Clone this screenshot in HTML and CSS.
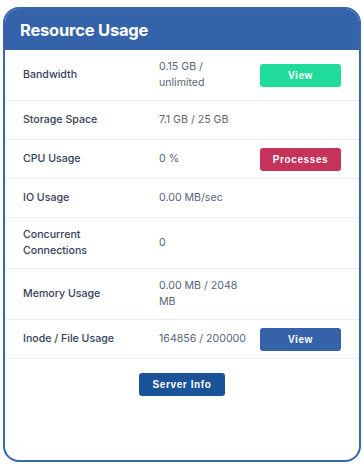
FILE: index.html
```html
<!DOCTYPE html>
<html lang="en">
<head>
    <meta charset="UTF-8">
    <meta name="viewport" content="width=device-width, initial-scale=1.0">
    <title>Resource Usage</title>
    <link rel="stylesheet" href="styles.css">
</head>
<body>
    <div class="card">
        <div class="card-header">
            <h2 class="card-title">Resource Usage</h2>
        </div>
        <div class="usage-list">
            <div class="usage-row double">
                <div class="usage-label">Bandwidth</div>
                <div class="usage-value">0.15 GB /<br>unlimited</div>
                <div class="usage-action"><button class="btn btn-green">View</button></div>
            </div>
            <div class="usage-row">
                <div class="usage-label">Storage Space</div>
                <div class="usage-value">7.1 GB / 25 GB</div>
                <div class="usage-action"></div>
            </div>
            <div class="usage-row">
                <div class="usage-label">CPU Usage</div>
                <div class="usage-value">0 %</div>
                <div class="usage-action"><button class="btn btn-red">Processes</button></div>
            </div>
            <div class="usage-row">
                <div class="usage-label">IO Usage</div>
                <div class="usage-value">0.00 MB/sec</div>
                <div class="usage-action"></div>
            </div>
            <div class="usage-row double">
                <div class="usage-label">Concurrent<br>Connections</div>
                <div class="usage-value">0</div>
                <div class="usage-action"></div>
            </div>
            <div class="usage-row double">
                <div class="usage-label">Memory Usage</div>
                <div class="usage-value">0.00 MB / 2048<br>MB</div>
                <div class="usage-action"></div>
            </div>
            <div class="usage-row">
                <div class="usage-label">Inode / File Usage</div>
                <div class="usage-value">164856 / 200000</div>
                <div class="usage-action"><button class="btn btn-blue">View</button></div>
            </div>
        </div>
        <div class="card-footer">
            <button class="btn btn-navy">Server Info</button>
        </div>
    </div>
</body>
</html>
```

FILE: styles.css
```css
body {
    margin: 0;
    font-family: Inter, "Noto Sans", sans-serif;
    background: #fff;
}
.card {
    box-sizing: border-box;
    width: 358px;
    height: 455px;
    margin: 7px 0 0 3px;
    border: 2px solid #3866ad;
    border-radius: 16px;
    overflow: hidden;
    background: #fff;
}
.card-header {
    height: 41px;
    background-color: #3563a9;
    display: flex;
    align-items: center;
    padding-left: 15px;
}
.card-title {
    margin: 0;
    color: #fff;
    font-size: 16.5px;
    font-weight: 700;
    letter-spacing: -0.2px;
}
.usage-row {
    display: grid;
    grid-template-columns: 136px 101px 81px;
    align-items: center;
    min-height: 38px;
    padding: 0 18px;
    border-bottom: 1px solid #e9eef4;
    font-size: 10.6px;
    line-height: 16px;
}
.usage-row.double {
    min-height: 50px;
}
.usage-label {
    color: #34405a;
    font-weight: 500;
}
.usage-value {
    color: #5b6374;
}
.btn {
    display: block;
    width: 81px;
    height: 23px;
    border: none;
    border-radius: 3px;
    color: #fff;
    font-family: "Liberation Sans", Arial, sans-serif;
    font-size: 10px;
    font-weight: 700;
    letter-spacing: 0.6px;
    cursor: pointer;
}
.btn-green {
    background-color: #1fdc9a;
}
.btn-red {
    background-color: #c5325a;
}
.btn-blue {
    background-color: #3563a9;
}
.btn-navy {
    width: 86px;
    background-color: #1b5398;
    margin: 0 auto;
}
.card-footer {
    padding-top: 14px;
}
```
